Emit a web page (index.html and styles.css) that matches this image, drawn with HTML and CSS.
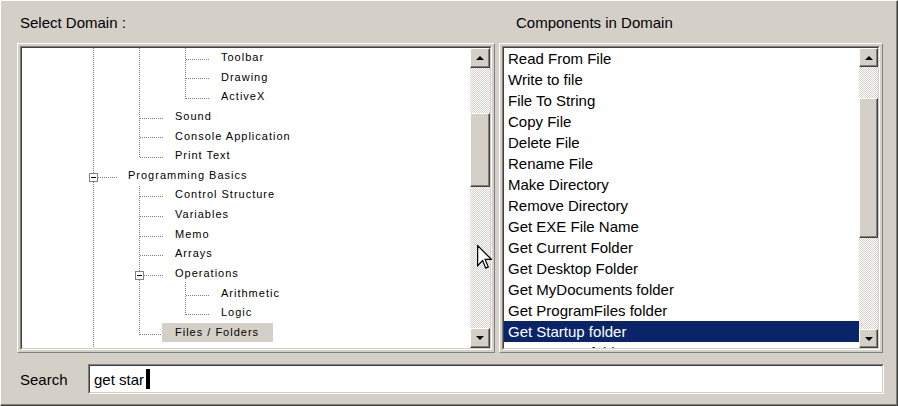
FILE: index.html
```html
<!DOCTYPE html>
<html>
<head>
<meta charset="utf-8">
<link rel="stylesheet" href="styles.css">
</head>
<body>
<div class="window">
  <div class="cols">
    <section class="col col-tree">
      <div class="caption">Select Domain :</div>
      <div class="panel tree-panel">
        <div class="sunken">
          <div class="well">
            <div class="tree">
              <svg class="tree-lines" width="448" height="300" viewBox="0 0 448 300">
                <g stroke="#808080" stroke-width="1" stroke-dasharray="1 1" fill="none">
                  <path d="M71.5 0V300"/>
                  <path d="M117.5 0V110M117.5 138V287"/>
                  <path d="M163.5 0V51M163.5 234V267"/>
                  <path d="M164 11.5H188M164 30.5H188M164 50.5H188M164 247.5H188M164 266.5H188"/>
                  <path d="M118 70.5H142M118 89.5H142M118 109.5H142M118 148.5H142M118 168.5H142M118 188.5H142M118 207.5H142M122 227.5H142M118 286.5H142"/>
                  <path d="M76 129.5H96"/>
                </g>
                <rect x="67.5" y="125.5" width="8" height="8" fill="#fff" stroke="#808080"/>
                <rect x="69" y="129" width="5" height="1" fill="#000"/>
                <rect x="113.5" y="223.5" width="8" height="8" fill="#fff" stroke="#808080"/>
                <rect x="115" y="227" width="5" height="1" fill="#000"/>
              </svg>
              <div class="node l3">Toolbar</div>
              <div class="node l3">Drawing</div>
              <div class="node l3">ActiveX</div>
              <div class="node l2">Sound</div>
              <div class="node l2">Console Application</div>
              <div class="node l2">Print Text</div>
              <div class="node l1">Programming Basics</div>
              <div class="node l2">Control Structure</div>
              <div class="node l2">Variables</div>
              <div class="node l2">Memo</div>
              <div class="node l2">Arrays</div>
              <div class="node l2">Operations</div>
              <div class="node l3">Arithmetic</div>
              <div class="node l3">Logic</div>
              <div class="node l2 sel"><span>Files / Folders</span></div>
            </div>
            <div class="vscroll tree-scroll">
              <div class="sb-btn"><span class="arr-up"></span></div>
              <div class="sb-pre"></div>
              <div class="sb-btn sb-thumb"></div>
              <div class="sb-rest"></div>
              <div class="sb-btn"><span class="arr-down"></span></div>
            </div>
          </div>
        </div>
      </div>
    </section>
    <section class="col col-list">
      <div class="caption">Components in Domain</div>
      <div class="panel list-panel">
        <div class="sunken">
          <div class="well">
            <div class="list">
              <div class="item">Read From File</div>
              <div class="item">Write to file</div>
              <div class="item">File To String</div>
              <div class="item">Copy File</div>
              <div class="item">Delete File</div>
              <div class="item">Rename File</div>
              <div class="item">Make Directory</div>
              <div class="item">Remove Directory</div>
              <div class="item">Get EXE File Name</div>
              <div class="item">Get Current Folder</div>
              <div class="item">Get Desktop Folder</div>
              <div class="item">Get MyDocuments folder</div>
              <div class="item">Get ProgramFiles folder</div>
              <div class="item selected">Get Startup folder</div>
              <div class="item">Get System folder</div>
            </div>
            <div class="vscroll list-scroll">
              <div class="sb-btn"><span class="arr-up"></span></div>
              <div class="sb-pre"></div>
              <div class="sb-btn sb-thumb"></div>
              <div class="sb-rest"></div>
              <div class="sb-btn"><span class="arr-down"></span></div>
            </div>
          </div>
        </div>
      </div>
    </section>
  </div>
  <div class="search">
    <label class="search-label">Search</label>
    <div class="search-input"><div class="search-inner">get star<span class="caret"></span></div></div>
  </div>
  <svg class="pointer" width="15" height="25" viewBox="0 0 12 20">
    <path d="M0.5 0.5V16.5L4.5 12.5L7 18.5L9 17.5L6.5 11.5H11.5Z" fill="#fff" stroke="#000" stroke-width="1" stroke-linejoin="miter"/>
  </svg>
</div>
</body>
</html>
```
FILE: styles.css
```css
* { box-sizing: border-box; }

body {
  margin: 0;
  background: #d4d0c8;
  font-family: "Liberation Sans", Arial, sans-serif;
  color: #000;
}

.window {
  position: relative;
  width: 898px;
  height: 406px;
  background: #d4d0c8;
  border: 1px solid;
  border-color: #fff #404040 #404040 #fff;
  box-shadow: inset -1px -1px #808080;
  padding: 13px 0 0 16px;
  display: flex;
  flex-direction: column;
}

.cols {
  display: flex;
  gap: 4px;
}

.col {
  display: flex;
  flex-direction: column;
}

.caption {
  font-size: 15px;
  line-height: 17px;
  height: 17px;
  margin-bottom: 12px;
  white-space: nowrap;
}

.col-tree .caption { padding-left: 3px; }
.col-list .caption { padding-left: 17px; }

.panel {
  height: 310px;
  border: 1px solid;
  border-color: #fff #808080 #808080 #fff;
  padding: 2px;
}

.tree-panel { width: 478px; }
.list-panel { width: 384px; }

.sunken {
  height: 100%;
  border: 1px solid;
  border-color: #808080 #fff #fff #808080;
}

.well {
  height: 100%;
  display: flex;
  border: 1px solid;
  border-color: #404040 #d4d0c8 #d4d0c8 #404040;
  background: #fff;
}

/* tree */
.tree {
  flex: 1;
  position: relative;
  overflow: hidden;
}

.tree-lines {
  position: absolute;
  left: 0;
  top: 0;
}

.node {
  position: relative;
  height: 19.64px;
  line-height: 19.64px;
  font-size: 11px;
  letter-spacing: 1px;
  white-space: nowrap;
}

.l1 { padding-left: 106px; }
.l2 { padding-left: 153px; }
.l3 { padding-left: 199px; }

.node.sel span {
  display: inline-block;
  background: #d4d0c8;
  margin-left: -13px;
  padding: 0 14px 0 13px;
  height: 19.64px;
}

/* scrollbars */
.vscroll {
  display: flex;
  flex-direction: column;
  background: repeating-conic-gradient(#d4d0c8 0 25%, #ffffff 0 50%) 0 0 / 2px 2px;
}

.tree-scroll { width: 20px; }
.list-scroll { width: 19px; }

.sb-btn {
  flex: none;
  height: 20px;
  background: #d4d0c8;
  border: 1px solid;
  border-color: #fff #404040 #404040 #fff;
  box-shadow: inset -1px -1px #808080;
  display: flex;
  align-items: center;
  justify-content: center;
}

.list-scroll .sb-btn { height: 19px; }

.tree-scroll .sb-pre { height: 45px; flex: none; }
.tree-scroll .sb-thumb { height: 74px; }
.list-scroll .sb-pre { height: 31px; flex: none; }
.list-scroll .sb-thumb { height: 140px; }

.sb-rest { flex: 1; }

.arr-up, .arr-down {
  width: 0;
  height: 0;
  border-left: 4px solid transparent;
  border-right: 4px solid transparent;
}
.arr-up { border-bottom: 4px solid #000; }
.arr-down { border-top: 4px solid #000; }

/* list */
.list {
  flex: 1;
  overflow: hidden;
}

.item {
  height: 21px;
  line-height: 21px;
  padding-left: 4px;
  font-size: 15px;
  white-space: nowrap;
}

.item.selected {
  background: #0a246a;
  color: #fff;
}

/* search */
.search {
  display: flex;
  align-items: center;
  margin-top: 11px;
}

.search-label {
  width: 71px;
  padding-left: 3px;
  font-size: 15px;
}

.search-input {
  width: 796px;
  height: 30px;
  border: 1px solid;
  border-color: #808080 #fff #fff #808080;
}

.search-inner {
  height: 100%;
  border: 1px solid;
  border-color: #404040 #d4d0c8 #d4d0c8 #404040;
  background: #fff;
  padding-left: 4px;
  font-size: 15px;
  display: flex;
  align-items: center;
  white-space: nowrap;
}

.caret {
  display: inline-block;
  width: 4px;
  height: 20px;
  margin-left: 2px;
  background: #000;
}

.pointer {
  position: absolute;
  left: 476px;
  top: 244px;
}
```
